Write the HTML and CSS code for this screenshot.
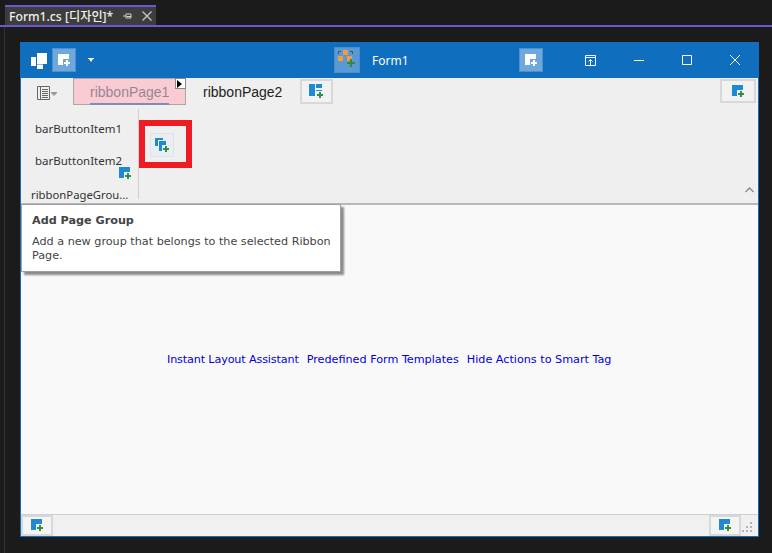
FILE: index.html
```html
<!DOCTYPE html>
<html lang="ko">
<head>
<meta charset="utf-8">
<title>Form1.cs [디자인]*</title>
<link rel="stylesheet" href="styles.css">
</head>
<body>
<svg class="defs" width="0" height="0" aria-hidden="true">
  <symbol id="add" viewBox="0 0 14 14">
    <path class="sq" d="M0 0H11V5H5V11H0Z"/>
    <path class="pl" d="M8 6H10V8H12V10H10V12H8V10H6V8H8Z"/>
  </symbol>
  <symbol id="addw" viewBox="0 0 14 14">
    <path fill="#fff" d="M0 0H11V5H5V11H0Z"/>
    <path fill="#fff" d="M8 6H10V8H12V10H10V12H8V10H6V8H8Z"/>
  </symbol>
</svg>
<div class="tabstrip">
  <div class="doctab">
    <span class="doctab-name">Form1.cs [디자인]*</span>
    <svg class="pin" width="10" height="10" viewBox="0 0 10 10"><path d="M0 5H3M3 2.500V7.500M3.500 3H8V7H3.500M3.500 5.500H8" fill="none" stroke="#d0d0d0"/></svg>
    <svg class="tabclose" width="10" height="10" viewBox="0 0 10 10"><path d="M0.500 0.500L9.500 9.500M9.500 0.500L0.500 9.500" stroke="#c8c8c8" stroke-width="1.300"/></svg>
  </div>
</div>
<main class="designer">
  <section class="form">
    <header class="titlebar">
      <div class="tb-left">
        <svg class="logo" width="17" height="17" viewBox="0 0 17 17"><path fill="#fff" d="M6 1H16V12H6ZM0 5H5V14H0ZM6 12.500H12V17H6Z"/></svg>
        <button class="tb-btn tb-first"><svg width="14" height="14"><use href="#addw"/></svg></button>
        <svg class="qat-arrow" width="6" height="4" viewBox="0 0 6 4"><path fill="#fff" d="M0 0H6V1H5L3 4L1 1H0Z"/></svg>
      </div>
      <div class="tb-center">
        <button class="tb-btn tb-logo">
          <svg width="20" height="20" viewBox="0 0 20 20"><path fill="#f89a3c" d="M6 0H11V5H6ZM1 6H6V11H1ZM10 6H15V11H10Z"/><path fill="none" stroke="#5a4a44" d="M1.500 4V1.500H4M13 1.500H15.500V4"/><path fill="#2e8b45" d="M13 9H15V12H18V14H15V17H13V14H10V12H13Z"/></svg>
        </button>
        <span class="tb-title">Form1</span>
      </div>
      <div class="tb-right">
        <button class="tb-btn tb-second"><svg width="14" height="14"><use href="#addw"/></svg></button>
        <svg class="wc wc-restore" width="11" height="11" viewBox="0 0 11 11"><path d="M.500 .500H10.500V10.500H.500ZM.500 2.500H10.500M5.500 10V4.500M3.500 6.500L5.500 4.500L7.500 6.500" fill="none" stroke="#fff"/></svg>
        <svg class="wc wc-min" width="10" height="11" viewBox="0 0 10 11"><path d="M0 5.500H10" stroke="#fff"/></svg>
        <svg class="wc wc-max" width="10" height="10" viewBox="0 0 10 10"><path d="M.500 .500H9.500V9.500H.500Z" fill="none" stroke="#fff"/></svg>
        <svg class="wc wc-close" width="10" height="10" viewBox="0 0 10 10"><path d="M0 0L10 10M10 0L0 10" stroke="#fff"/></svg>
      </div>
    </header>
    <nav class="ribbon-tabs">
      <svg class="appmenu" width="13" height="14" viewBox="0 0 13 14"><path fill="none" stroke="#666" d="M.500 .500H12.500V13.500H.500ZM3.500 .500V13.500M5 3.500H11M5 5.500H11M5 7.500H11M5 9.500H11M5 11.500H11"/></svg>
      <svg class="appmenu-arrow" width="6" height="4" viewBox="0 0 6 4"><path fill="#999" d="M0 0H6V1L3 4L0 1Z"/></svg>
      <div class="ribbon-tab selected">
        <span class="tab-label">ribbonPage1</span>
        <span class="smart-tag"><svg width="5" height="8" viewBox="0 0 5 8"><path d="M0 0L5 4L0 8Z"/></svg></span>
      </div>
      <span class="ribbon-tab plain">ribbonPage2</span>
      <button class="add-btn add-page">
        <svg width="15" height="15" viewBox="0 0 15 15"><path class="sq" d="M0 0H6V12H0ZM7 0H13V4H7ZM7 6H13V7H7Z"/><path class="pl" d="M10 8H12V10H14V12H12V14H10V12H8V10H10Z"/></svg>
      </button>
      <button class="add-btn add-right"><svg width="14" height="14"><use href="#add"/></svg></button>
    </nav>
    <div class="ribbon-body">
      <div class="group">
        <span class="item item1">barButtonItem1</span>
        <span class="item item2">barButtonItem2</span>
        <svg class="item-add" width="14" height="14"><use href="#add"/></svg>
        <span class="group-caption">ribbonPageGrou...</span>
      </div>
      <div class="redbox">
        <button class="add-group">
          <svg width="15" height="15" viewBox="0 0 15 15"><path class="sq" d="M0 0H8V2H3V8H0Z"/><path class="sq" d="M4 3H11V7H7V13H4Z"/><path class="pl" d="M10 8H12V10H14V12H12V14H10V12H8V10H10Z"/></svg>
        </button>
      </div>
      <svg class="collapse" width="9" height="6" viewBox="0 0 9 6"><path d="M.500 5L4.500 1L8.500 5" fill="none" stroke="#8a8a8a" stroke-width="1.400"/></svg>
    </div>
    <div class="content">
      <div class="tooltip">
        <div class="tip-title">Add Page Group</div>
        <div class="tip-text">Add a new group that belongs to the selected Ribbon Page.</div>
      </div>
      <div class="actions">
        <a class="link-first">Instant Layout Assistant</a>
        <a>Predefined Form Templates</a>
        <a>Hide Actions to Smart Tag</a>
      </div>
    </div>
    <footer class="statusbar">
      <button class="status-btn"><svg width="14" height="14"><use href="#add"/></svg></button>
      <button class="status-btn status-right"><svg width="14" height="14"><use href="#add"/></svg></button>
      <svg class="grip" width="11" height="11" viewBox="0 0 11 11"><path fill="#b4b4b4" d="M8 0H10V2H8ZM4 4H6V6H4ZM8 4H10V6H8ZM0 8H2V10H0ZM4 8H6V10H4ZM8 8H10V10H8Z"/></svg>
    </footer>
  </section>
</main>
</body>
</html>
```
FILE: styles.css
```css
* { box-sizing: border-box; }
html, body { margin: 0; height: 100%; }
body {
  width: 772px;
  height: 553px;
  overflow: hidden;
  background: #1b1b1c;
  font-family: "Liberation Sans", sans-serif;
  display: flex;
  flex-direction: column;
}
.defs { position: absolute; }
.sq { fill: #1e8ad2; }
.pl { fill: #2f8f46; }
button { padding: 0; margin: 0; font: inherit; display: flex; align-items: center; justify-content: center; }
svg { display: block; }

.tabstrip {
  height: 27px;
  flex: none;
  padding: 5px 0 0 5px;
  border-bottom: 2px solid #6a57d2;
}
.doctab {
  width: 151px;
  height: 20px;
  background: #3d3d3d;
  border-top: 2px solid #6a57d2;
  display: flex;
  align-items: center;
  padding-left: 4px;
  color: #f0f0f0;
}
.doctab-name {
  font: 500 12.200px "Noto Sans", "Noto Sans CJK KR", sans-serif;
  width: 114px;
  white-space: nowrap;
}
.pin { margin-right: 9px; }

.designer {
  flex: 1;
  border-left: 1px solid #333;
  margin-left: 4px;
  padding: 15px 0 0 15px;
}
.form {
  width: 739px;
  height: 495px;
  border: solid #106ebe;
  border-width: 0 1px 1px 1px;
  background: #f0f0f0;
  display: flex;
  flex-direction: column;
  position: relative;
}

.titlebar {
  height: 36px;
  flex: none;
  margin: 0 -1px;
  background: #106ebe;
  position: relative;
  display: flex;
  align-items: center;
  color: #fff;
}
.tb-left { display: flex; align-items: center; padding-left: 11px; width: 314px; }
.logo { margin-right: 4px; }
.tb-btn { background: #6fa8dc; border: 1px solid #4f8fc8; }
.tb-first { width: 24px; height: 24px; padding: 2px 0 0 2px; }
.qat-arrow { margin-left: 12px; }
.tb-center { display: flex; align-items: center; width: 185px; }
.tb-logo { width: 26px; height: 26px; background: #5a9ad4; }
.tb-title { margin-left: 12px; font: 12px "Noto Sans", sans-serif; }
.tb-right { display: flex; align-items: center; }
.tb-second { width: 24px; height: 24px; margin-right: 42px; padding: 2px 0 0 2px; }
.wc { flex: none; }
.wc-restore { margin-right: 38px; }
.wc-min { margin-right: 38px; }
.wc-max { margin-right: 38px; }

.ribbon-tabs {
  height: 28px;
  flex: none;
  display: flex;
  align-items: flex-start;
  background: #efefef;
  color: #222;
  padding-left: 16px;
}
.appmenu { margin-top: 8px; }
.appmenu-arrow { margin: 14px 0 0 1px; }
.ribbon-tab { font-size: 14px; line-height: 29px; }
.selected {
  position: relative;
  width: 113px;
  height: 27px;
  margin-left: 16px;
  background: #f9ccd3;
  border: 1px solid #a8a8a8;
  padding-left: 16px;
  line-height: 27px;
  color: #9a8596;
}
.tab-label { display: block; width: 79px; height: 26px; border-bottom: 2px solid #7d8db8; }
.smart-tag {
  position: absolute;
  top: -1px;
  right: -1px;
  width: 11px;
  height: 11px;
  background: #fff;
  border: 1px solid #888;
  display: flex;
  align-items: center;
  padding-left: 1px;
}
.plain { margin-left: 17px; width: 97px; }
.add-btn {
  background: #f2f2f2;
  border: 2px solid #d8d8d8;
  margin-top: 1px;
  align-items: flex-start;
  justify-content: flex-start;
}
.add-page { width: 33px; height: 25px; padding: 3px 0 0 7px; }
.add-right { width: 36px; height: 24px; margin-left: auto; margin-right: 2px; padding: 4px 0 0 10px; }

.ribbon-body {
  height: 99px;
  flex: none;
  background: #efefef;
  border-bottom: 2px solid #b8b8b8;
  display: flex;
  position: relative;
}
.group {
  width: 118px;
  height: 90px;
  margin-top: 3px;
  border-right: 1px solid #cfcfcf;
  position: relative;
  font-size: 11.500px;
  color: #333;
}
.item, .group-caption { position: absolute; white-space: nowrap; font-family: "Noto Sans", sans-serif; }
.item1 { left: 14px; top: 12px; }
.item2 { left: 14px; top: 44px; }
.group-caption { left: 10px; top: 78px; font-size: 11.300px; }
.item-add { position: absolute; left: 98px; top: 58px; }
.redbox {
  width: 53px;
  height: 48px;
  margin-top: 14px;
  border: 6px solid #ed1c24;
  padding: 7px 0 0 5px;
}
.add-group {
  width: 24px;
  height: 24px;
  background: #e9eef3;
  border: 1px solid #dce3ea;
  padding: 4px 0 0 4px;
  align-items: flex-start;
  justify-content: flex-start;
}
.collapse { position: absolute; right: 4px; bottom: 10px; }

.content {
  flex: 1;
  background: #f9f9f9;
  position: relative;
  padding: 148px 0 0 146px;
}
.tooltip {
  position: absolute;
  left: 0;
  top: -1px;
  width: 320px;
  height: 68px;
  background: #fff;
  border: 1px solid #a0a0a0;
  box-shadow: 3px 3px 2px #8a8a8a;
  padding: 9px 8px 8px 10px;
  color: #444;
  font-family: "DejaVu Sans", sans-serif;
  font-size: 11.200px;
  line-height: 14px;
}
.tip-title { font-weight: bold; margin-bottom: 7px; }
.actions {
  display: flex;
  gap: 8px;
  font-family: "DejaVu Sans", sans-serif;
  font-size: 11.200px;
  color: #0000e0;
  line-height: 14px;
  white-space: nowrap;
}
.link-first { letter-spacing: -0.140px; }

.statusbar {
  height: 22px;
  flex: none;
  background: #f0f0f0;
  border-top: 1px solid #d0d0d0;
  display: flex;
  position: relative;
}
.status-btn { width: 32px; height: 21px; background: #f4f4f4; border: 2px solid #d8d8d8; padding: 1px 0 0 2px; }
.status-right { margin-left: auto; margin-right: 17px; }
.grip { position: absolute; right: 5px; bottom: 3px; }
```
